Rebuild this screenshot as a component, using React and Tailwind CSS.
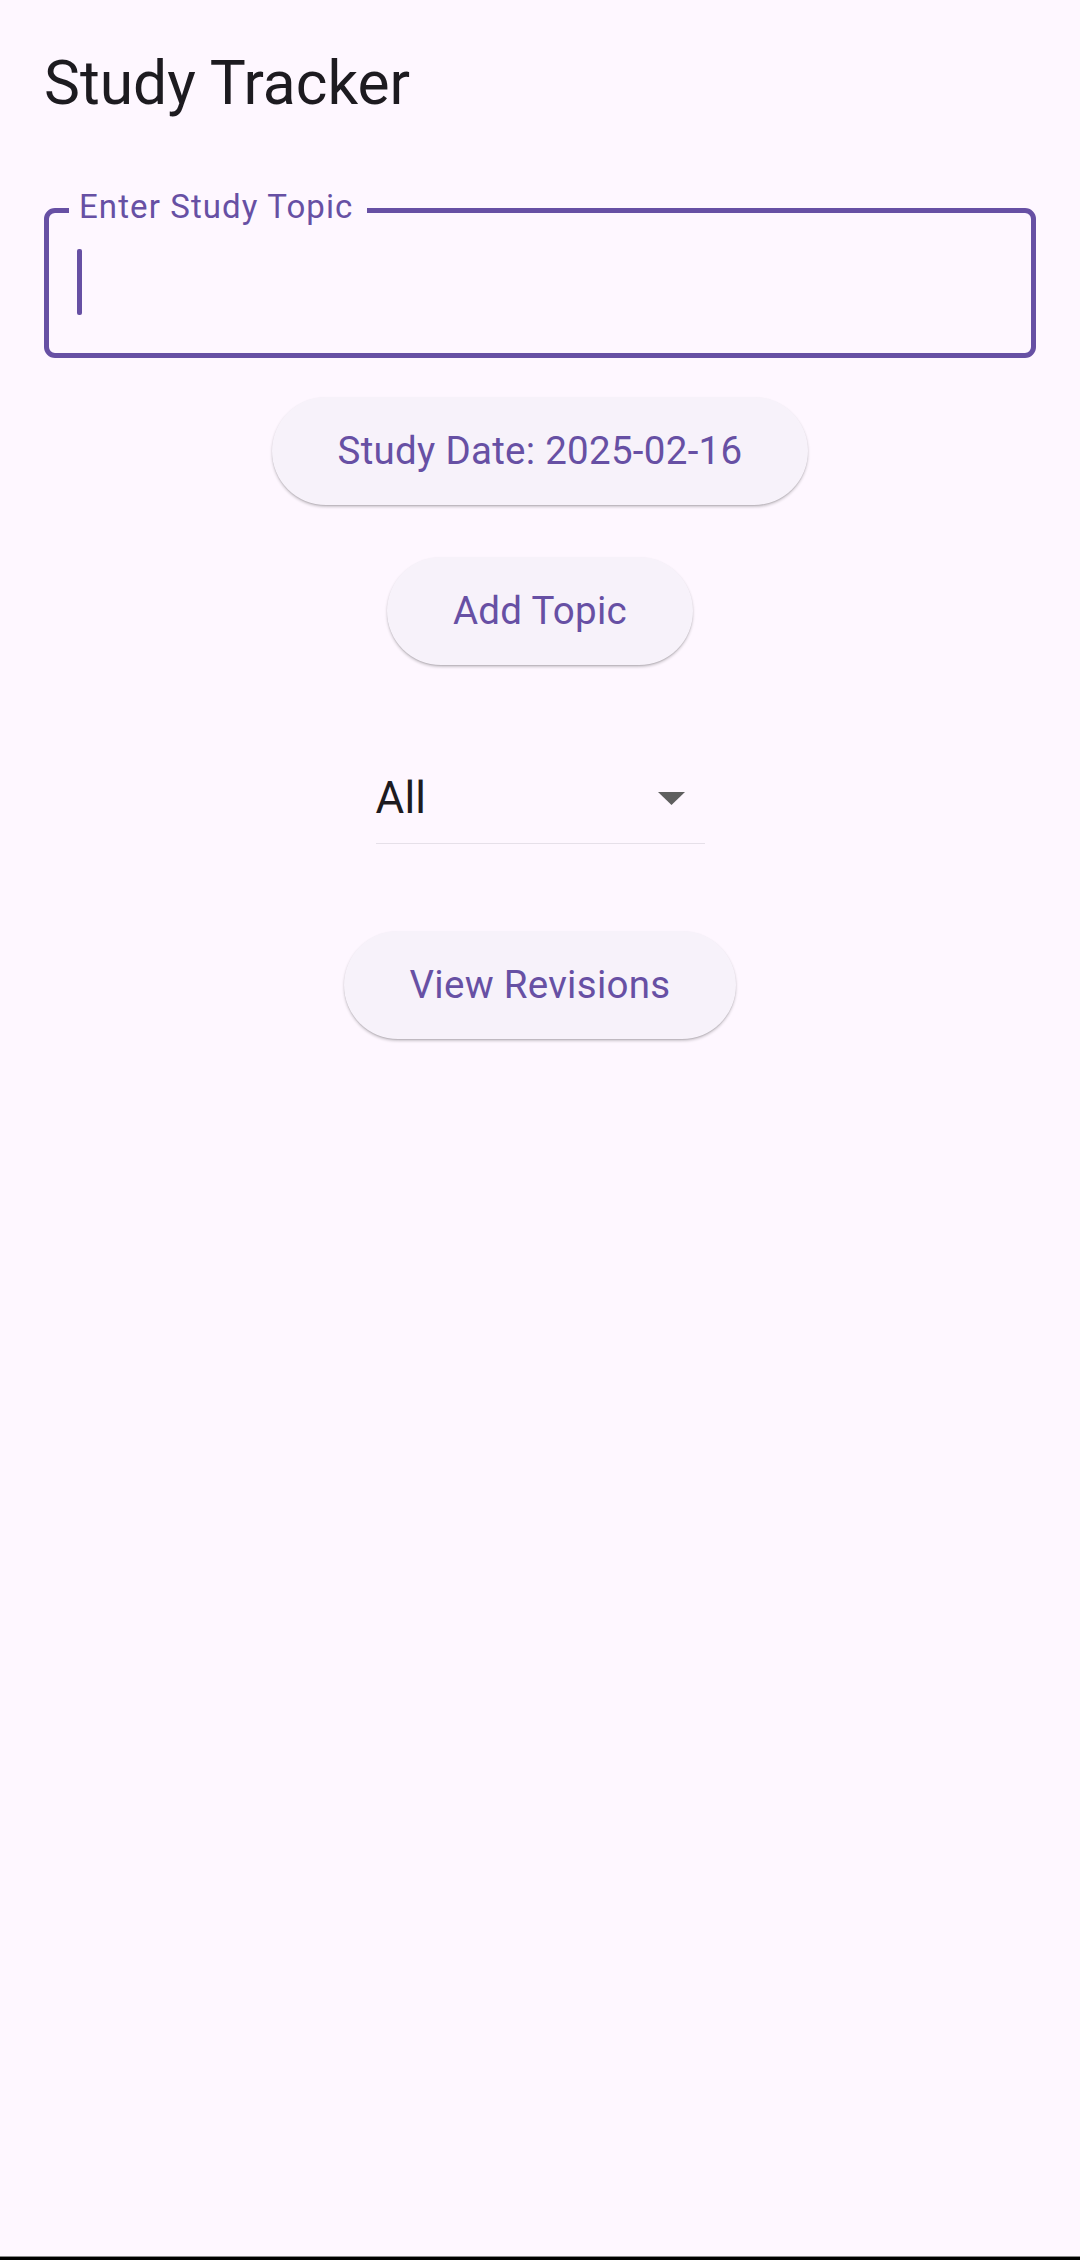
import React from "react";

function PillButton({ children, className = "" }) {
  return (
    <button
      className={`h-[108px] px-[66px] rounded-full bg-[#F7F2FA] text-[#6750A4] text-[38.5px] font-normal tracking-[0.28px] leading-none shadow-[0_2px_3px_rgba(0,0,0,0.2),0_1px_1px_rgba(0,0,0,0.1)] ${className}`}
      style={{ fontFamily: "Roboto, 'Noto Sans', sans-serif" }}
    >
      {children}
    </button>
  );
}

export default function App() {
  return (
    <div
      className="w-[1080px] h-[2260px] bg-[#FEF7FF] flex flex-col overflow-hidden"
      style={{ fontFamily: "Roboto, 'Noto Sans', sans-serif" }}
    >
      <div className="h-[168px] flex items-center px-[44px] shrink-0">
        <h1 className="text-[60.5px] leading-none font-normal text-[#1D1B20]">Study Tracker</h1>
      </div>

      <div className="flex flex-col items-center px-[44px]">
        <div className="relative mt-[40px] w-full h-[150px] border-[5px] border-[#6750A4] rounded-[11px]">
          <span className="absolute left-[20px] top-[-23px] pl-[10px] pr-[14px] bg-[#FEF7FF] text-[33px] leading-[33px] text-[#6750A4] tracking-[1.1px]">
            Enter Study Topic
          </span>
          <span className="absolute left-[28px] top-[36px] w-[5px] h-[66px] bg-[#6750A4] rounded-[2px]" />
        </div>

        <PillButton className="mt-[39px]">Study Date: 2025-02-16</PillButton>
        <PillButton className="mt-[52px]">Add Topic</PillButton>

        <div className="mt-[111px] w-[329px] border-b border-[#E6E0E9] pb-[23px] flex items-center justify-between">
          <span className="text-[44px] leading-[44px] text-[#1D1B20] tracking-[0.2px]">All</span>
          <svg width="27" height="13" viewBox="0 0 27 13" className="mr-[20px]">
            <polygon points="0,0 27,0 13.5,13" fill="#5F5F5F" />
          </svg>
        </div>

        <PillButton className="mt-[87px]">View Revisions</PillButton>
      </div>

      <div className="flex-1" />
      <div className="h-[4px] shrink-0 border-t border-[#8a8a8a] bg-black" />
    </div>
  );
}
